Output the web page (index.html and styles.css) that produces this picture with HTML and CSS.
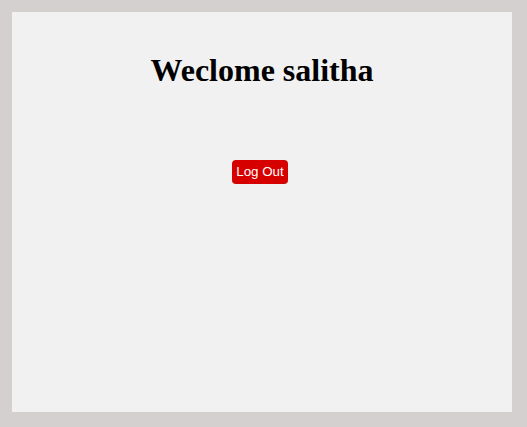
FILE: index.html
```html
<!DOCTYPE html>
<html>
<head>
<meta charset="utf-8">
<link rel="stylesheet" href="styles.css">
</head>
<body>
<div class="panel">
  <h1 class="title">Weclome salitha</h1>
  <button class="logout">Log Out</button>
</div>
</body>
</html>
```
FILE: styles.css
```css
html, body {
  margin: 0;
  padding: 0;
}
body {
  background: #d3d0cf;
  padding: 12px;
  width: 527px;
  height: 427px;
  box-sizing: border-box;
}
.panel {
  width: 500px;
  height: 400px;
  background: #f1f1f1;
  display: flex;
  flex-direction: column;
  align-items: center;
  padding-top: 40px;
  box-sizing: border-box;
}
.title {
  margin: 0;
  font-family: "Liberation Serif", serif;
  font-size: 32px;
  font-weight: bold;
  line-height: 37px;
  color: #000;
}
.logout {
  margin-top: 71px;
  margin-right: 4px;
  font-family: "Liberation Sans", sans-serif;
  font-size: 13.33px;
  line-height: 16px;
  padding: 4px 4px;
  border: none;
  border-radius: 4px;
  background: #d70000;
  color: #fff;
}
```
